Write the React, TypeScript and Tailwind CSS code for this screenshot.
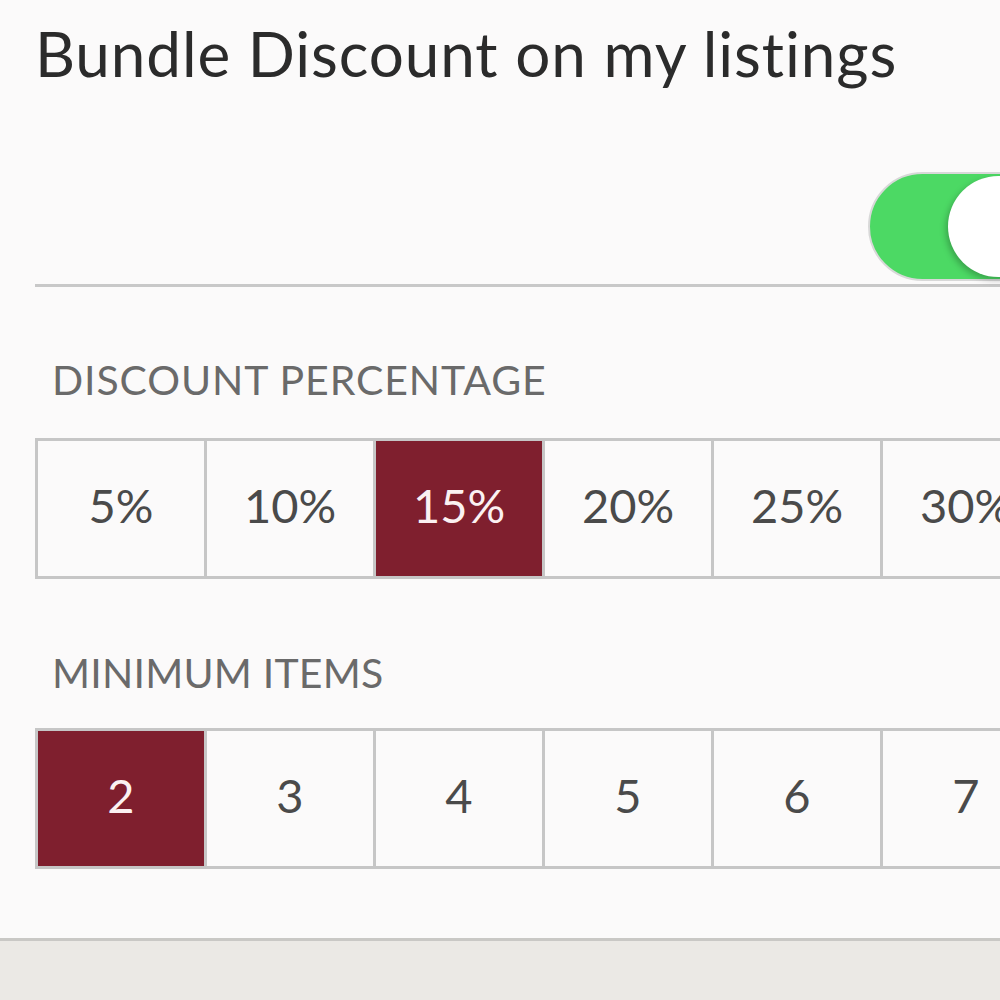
import React from "react";

const percents = ["5%", "10%", "15%", "20%", "25%", "30%"];
const items = ["2", "3", "4", "5", "6", "7"];

function OptionRow({ options, selected }: { options: string[]; selected: string }) {
  return (
    <div className="flex ml-[35px] h-[141px] shrink-0">
      {options.map((opt, i) => {
        const active = opt === selected;
        return (
          <div
            key={opt}
            className={
              "w-[172px] shrink-0 h-full flex items-center justify-center pb-[7px] border-[3px] border-[#c6c6c6] text-[47px] " +
              (i > 0 ? "-ml-[3px] " : "") +
              (active ? "bg-[#7f1f2e] text-[#fbf1f2]" : "bg-[#fbfafa] text-[#4a4a4a]")
            }
          >
            {opt}
          </div>
        );
      })}
    </div>
  );
}

export default function App() {
  return (
    <div
      className="w-[1000px] h-[1000px] overflow-hidden bg-[#fbfafa] flex flex-col"
      style={{ fontFamily: "Lato, 'Open Sans', sans-serif" }}
    >
      <h1 className="ml-[35px] mt-[15px] text-[62px] leading-[76px] tracking-[0.9px] text-[#2b2b2b] whitespace-nowrap">
        Bundle Discount on my listings
      </h1>

      {/* toggle row */}
      <div className="h-[196px] shrink-0 ml-[35px] border-b-[3px] border-[#c8c8c8] flex justify-end items-start pt-[81px]">
        <div className="relative w-[132px] h-[109px] overflow-visible">
          <div className="absolute left-0 top-0 w-[190px] h-[109px] rounded-full bg-[#4cd964] border-2 border-[#d8d8d8]">
            <div className="absolute left-[78px] top-[2px] w-[101px] h-[101px] rounded-full bg-white shadow-[-2px_3px_6px_rgba(0,0,0,0.25)]" />
          </div>
        </div>
      </div>

      <div className="ml-[52px] mt-[73px] text-[41px] leading-[40px] tracking-[0.9px] text-[#6a6a6a] whitespace-nowrap">
        DISCOUNT PERCENTAGE
      </div>
      <div className="mt-[38px]">
        <OptionRow options={percents} selected="15%" />
      </div>

      <div className="ml-[52px] mt-[74px] text-[41px] leading-[40px] tracking-[0.2px] text-[#6a6a6a] whitespace-nowrap">
        MINIMUM ITEMS
      </div>
      <div className="mt-[35px]">
        <OptionRow options={items} selected="2" />
      </div>

      <div className="mt-[69px] flex-1 border-t-[3px] border-[#c9c8c5] bg-[#ebe9e5]" />
    </div>
  );
}
